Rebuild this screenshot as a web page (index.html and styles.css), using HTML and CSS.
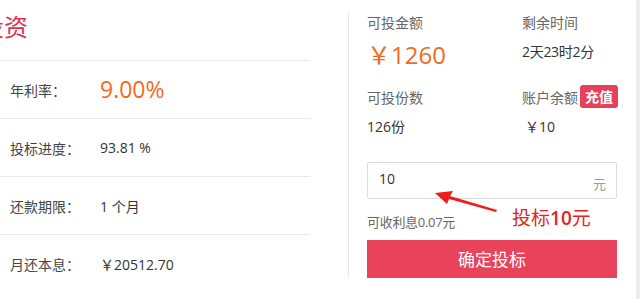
FILE: index.html
```html
<!DOCTYPE html>
<html lang="zh">
<head>
<meta charset="utf-8">
<link rel="stylesheet" href="styles.css">
</head>
<body>
<div class="page">
  <div class="left">
    <div class="title"><span class="title-text">投资</span></div>
    <div class="row"><span class="label">年利率：</span><span class="value rate">9.00%</span></div>
    <div class="row"><span class="label">投标进度：</span><span class="value">93.81 %</span></div>
    <div class="row"><span class="label">还款期限：</span><span class="value">1 个月</span></div>
    <div class="row last"><span class="label">月还本息：</span><span class="value">￥20512.70</span></div>
  </div>
  <div class="right">
    <div class="pair r1">
      <div class="c1 cell-label">可投金额</div>
      <div class="c2 cell-label">剩余时间</div>
    </div>
    <div class="pair r2">
      <div class="c1 amount">￥1260</div>
      <div class="c2 cell-value time">2天23时2分</div>
    </div>
    <div class="pair r3">
      <div class="c1 cell-label">可投份数</div>
      <div class="c2 cell-label">账户余额<span class="badge">充值</span></div>
    </div>
    <div class="pair r4">
      <div class="c1 cell-value">126份</div>
      <div class="c2 cell-value yen">￥10</div>
    </div>
    <div class="input-box"><span class="input-val">10</span><span class="unit">元</span></div>
    <div class="interest">可收利息0.07元</div>
    <div class="btn">确定投标</div>
    <div class="note">投标<b>10</b>元</div>
    <svg class="arrow" width="70" height="30" viewBox="0 0 70 30">
      <path d="M2 4 L20 2 L17 7 L64 21 L63 23 L16 10 L14 15 Z" fill="#ee1c1c"/>
    </svg>
  </div>
  <div class="strip"></div>
</div>
</body>
</html>
```
FILE: styles.css
```css
* { box-sizing: border-box; }
html, body { margin: 0; padding: 0; background: #fff; }
body {
  font-family: "Open Sans", "Noto Sans CJK SC", sans-serif;
  color: #333;
  width: 640px;
  height: 299px;
  overflow: hidden;
}
.page {
  display: flex;
  width: 640px;
  height: 299px;
}
.left {
  width: 310px;
  flex: none;
}
.title {
  height: 61px;
  border-bottom: 1px solid #e8e8e8;
  overflow: hidden;
}
.title-text {
  display: block;
  margin-left: -20px;
  padding-top: 10px;
  font-family: "Noto Sans CJK SC", sans-serif;
  font-size: 24px;
  line-height: 32px;
  color: #d9344f;
  white-space: nowrap;
}
.row {
  display: flex;
  align-items: center;
  height: 58px;
  border-bottom: 1px solid #e8e8e8;
  padding-left: 10px;
  font-size: 14px;
}
.row.last { border-bottom: none; }
.label {
  width: 90px;
  font-family: "Noto Sans CJK SC", sans-serif;
  color: #444;
}
.value {
  color: #333;
}
.rate {
  font-size: 23px;
  color: #f26a1b;
  position: relative;
  top: -1px;
}
.right {
  position: relative;
  margin-left: 38px;
  margin-top: 12px;
  height: 266px;
  width: 288px;
  flex: none;
  border-left: 1px solid #e8e8e8;
  padding-left: 18px;
  padding-right: 19px;
  display: flex;
  flex-direction: column;
}
.pair {
  display: flex;
  align-items: center;
  white-space: nowrap;
}
.c1 { width: 155px; flex: none; }
.c2 { flex: 1; }
.r1 { height: 20px; }
.r2 { height: 30px; margin-top: 8px; }
.r3 { height: 23px; margin-top: 15px; }
.r4 { height: 20px; margin-top: 9px; }
.cell-label {
  font-family: "Noto Sans CJK SC", sans-serif;
  font-size: 14px;
  color: #666;
  display: flex;
  align-items: center;
}
.amount {
  font-size: 24px;
  line-height: 30px;
  color: #f26a1b;
}
.cell-value {
  font-size: 14px;
  line-height: 20px;
  color: #333;
}
.time { position: relative; top: -3px; letter-spacing: -0.3px; }
.yen { padding-left: 3px; }
.badge {
  display: inline-block;
  margin-left: 2px;
  height: 23px;
  line-height: 23px;
  padding: 0 5px;
  background: #e8405a;
  color: #fff;
  border-radius: 3px;
  font-weight: bold;
  font-size: 14px;
}
.input-box {
  margin-top: 25px;
  height: 37px;
  border: 1px solid #dcdcdc;
  border-radius: 2px;
  display: flex;
  align-items: center;
  justify-content: space-between;
  padding: 0 10px 0 11px;
  font-size: 14px;
}
.input-val { color: #333; position: relative; top: -2px; }
.unit {
  color: #999;
  font-family: "Noto Sans CJK SC", sans-serif;
  font-size: 13px;
  position: relative;
  top: 3px;
}
.interest {
  margin-top: 13px;
  font-size: 13px;
  line-height: 20px;
  color: #666;
  letter-spacing: -0.3px;
}
.btn {
  margin-top: 8px;
  height: 38px;
  line-height: 38px;
  background: #e8435a;
  color: #fff;
  text-align: center;
  font-family: "Noto Sans CJK SC", sans-serif;
  font-size: 17px;
}
.note {
  position: absolute;
  left: 163px;
  top: 193px;
  font-family: "Noto Sans CJK SC", sans-serif;
  font-size: 19px;
  line-height: 24px;
  color: #e52424;
}
.note b {
  font-family: "Open Sans", sans-serif;
  font-weight: 600;
}
.arrow {
  position: absolute;
  left: 84px;
  top: 177px;
}
.strip {
  flex: 1;
  background: #ececec;
}
```
